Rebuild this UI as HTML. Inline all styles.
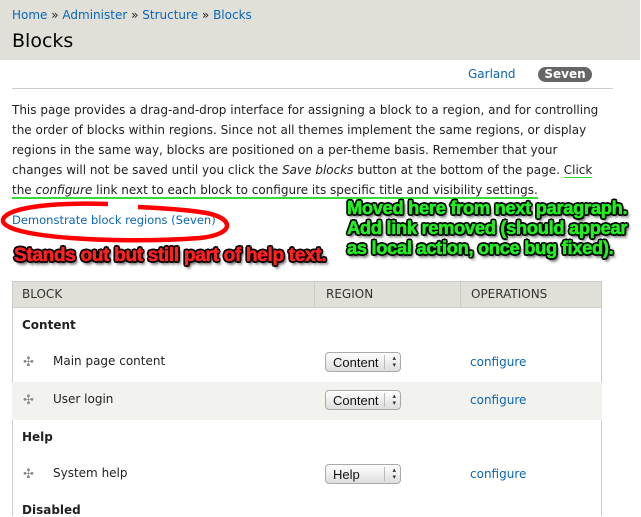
<!DOCTYPE html>
<html><head><style>
body{margin:0;width:641px;height:516px;overflow:hidden;background:#fff;font-family:"DejaVu Sans","Liberation Sans",sans-serif;font-size:12px;color:#222;position:relative}
.hd{position:absolute;left:0;top:0;width:640px;height:60px;background:#e0dfd8}
a{color:#0b66b4;text-decoration:none}
.abs{position:absolute;white-space:nowrap}
.p{position:absolute;left:12px;top:100px;width:620px;line-height:20px;font-size:12px;color:#222;white-space:nowrap}
.sel{display:inline-block;border:1px solid #aaa;border-radius:4px;background:linear-gradient(#fff,#ddd);height:20px;line-height:19px;width:76px;font-family:"Liberation Sans",sans-serif;font-size:13px;padding-left:7px;box-sizing:border-box;position:relative;color:#111}
.sel:after{content:"\25B4\A\25BE";white-space:pre;position:absolute;right:4px;top:2px;font-size:7px;line-height:7px;color:#333}
.sel:before{content:"";position:absolute;right:15px;top:2px;height:14px;border-left:1px solid #bbb}
.cross{position:absolute;left:23px;font-size:13px;color:#888}
.ann{font-family:"Liberation Sans",sans-serif;font-weight:bold;letter-spacing:-0.3px;-webkit-text-stroke:0.6px currentColor;text-shadow:-1.5px -1.5px 0 #000,1.5px -1.5px 0 #000,-1.5px 1.5px 0 #000,1.5px 1.5px 0 #000,0 2px 0 #000,2px 0 0 #000,-2px 0 0 #000,0 -2px 0 #000,2px 3px 3px #000}
</style></head><body>
<div class="hd"></div>
<div class="abs" style="left:12px;top:8px;font-size:12px"><a>Home</a> » <a>Administer</a> » <a>Structure</a> » <a>Blocks</a></div>
<div class="abs" style="left:12px;top:30px;font-size:19px;color:#000">Blocks</div>
<div class="abs" style="left:468px;top:67px;font-size:12px"><a>Garland</a></div>
<div class="abs" style="left:538px;top:67px;width:54px;height:15px;border-radius:8px;background:#666;color:#fff;font-weight:bold;font-size:12px;text-align:center;line-height:15px">Seven</div>
<div class="abs" style="left:12px;top:88px;width:601px;border-top:1px solid #ccc"></div>
<div class="p">This page provides a drag-and-drop interface for assigning a block to a region, and for controlling<br>the order of blocks within regions. Since not all themes implement the same regions, or display<br>regions in the same way, blocks are positioned on a per-theme basis. Remember that your<br>changes will not be saved until you click the <i>Save blocks</i> button at the bottom of the page. <span style="border-bottom:1px solid #3d3">Click</span><br><span style="border-bottom:2px solid #3d3">the <i>configure</i> link next to each block to configure its specific title and visibility settings.</span></div>
<div class="abs" style="left:12px;top:213px;font-size:11.5px"><a>Demonstrate block regions (Seven)</a></div>
<svg class="abs" style="left:0;top:198px" width="240" height="50"><path d="M108 6 C50 4 5 10 3 22 C1 40 120 46 200 40 C238 36 234 18 200 14 C180 11 160 10 138 9" fill="none" stroke="#f00" stroke-width="4.5"/></svg>
<div class="abs ann" style="left:14px;top:245px;color:#f22;font-size:19px">Stands out but still part of help text.</div>
<div class="abs ann" style="left:347px;top:198px;color:#2e2;line-height:20px;font-size:18.3px">Moved here from next paragraph.<br>Add link removed (should appear<br>as local action, once bug fixed).</div>
<div class="abs" style="left:12px;top:281px;width:590px;height:27px;background:#e0dfd8;border:1px solid #ccc;box-sizing:border-box"></div>
<div class="abs" style="left:314px;top:281px;height:27px;border-left:1px solid #ccc"></div>
<div class="abs" style="left:460px;top:281px;height:27px;border-left:1px solid #ccc"></div>
<div class="abs" style="left:12px;top:308px;height:208px;border-left:1px solid #ccc"></div>
<div class="abs" style="left:601px;top:308px;height:208px;border-left:1px solid #ccc"></div>
<div class="abs" style="left:22px;top:287px;color:#333">BLOCK</div>
<div class="abs" style="left:326px;top:287px;color:#333">REGION</div>
<div class="abs" style="left:471px;top:287px;color:#333">OPERATIONS</div>
<div class="abs" style="left:22px;top:318px;font-weight:bold">Content</div>
<div class="abs" style="left:12px;top:382px;width:590px;height:38px;background:#f2f2ee"></div>
<div class="cross" style="top:355px">✣</div><div class="abs" style="left:53px;top:354px">Main page content</div>
<div class="abs" style="left:325px;top:352px"><span class="sel">Content</span></div><div class="abs" style="left:470px;top:355px"><a>configure</a></div>
<div class="cross" style="top:393px">✣</div><div class="abs" style="left:53px;top:392px">User login</div>
<div class="abs" style="left:325px;top:390px"><span class="sel">Content</span></div><div class="abs" style="left:470px;top:393px"><a>configure</a></div>
<div class="abs" style="left:22px;top:430px;font-weight:bold">Help</div>
<div class="cross" style="top:467px">✣</div><div class="abs" style="left:53px;top:466px">System help</div>
<div class="abs" style="left:325px;top:464px"><span class="sel">Help</span></div><div class="abs" style="left:470px;top:467px"><a>configure</a></div>
<div class="abs" style="left:22px;top:503px;font-weight:bold">Disabled</div>
</body></html>
